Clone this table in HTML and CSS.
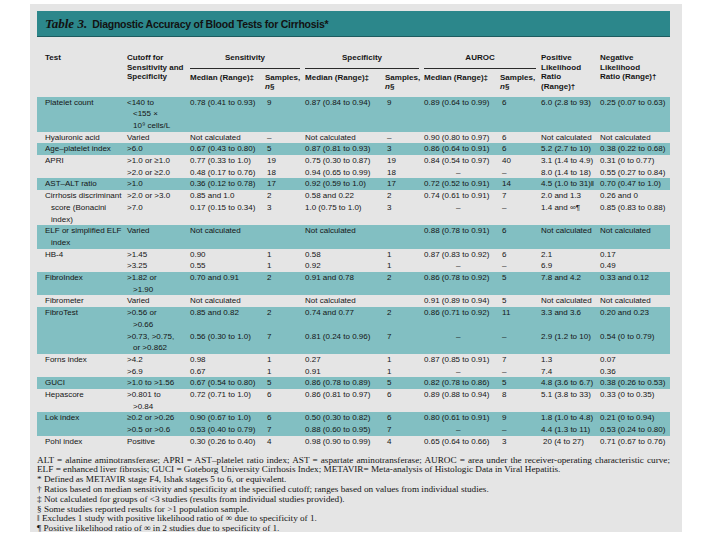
FILE: index.html
```html
<!DOCTYPE html>
<html>
<head>
<meta charset="utf-8">
<link rel="stylesheet" href="styles.css">
</head>
<body>
<div class="panel">
  <div class="titlebar"><span class="tnum">Table 3.</span><span class="ttext">Diagnostic Accuracy of Blood Tests for Cirrhosis*</span></div>
  <table class="tbl">
    <colgroup>
      <col class="w-test"><col class="w-cut"><col class="w-med1"><col class="w-s1"><col class="w-med2"><col class="w-s2"><col class="w-med3"><col class="w-s3"><col class="w-plr"><col class="w-nlr">
    </colgroup>
    <thead>
      <tr class="r1">
        <th rowspan="2" class="h-test">Test</th>
        <th rowspan="2">Cutoff for<br>Sensitivity and<br>Specificity</th>
        <th colspan="2" class="grp"><span class="grp-line">Sensitivity</span></th>
        <th colspan="2" class="grp"><span class="grp-line">Specificity</span></th>
        <th colspan="2" class="grp"><span class="grp-line">AUROC</span></th>
        <th rowspan="2">Positive<br>Likelihood<br>Ratio<br>(Range)†</th>
        <th rowspan="2">Negative<br>Likelihood<br>Ratio (Range)†</th>
      </tr>
      <tr class="r2">
        <th>Median (Range)‡</th><th>Samples,<br><i>n</i>§</th>
        <th>Median (Range)‡</th><th>Samples,<br><i>n</i>§</th>
        <th>Median (Range)‡</th><th>Samples,<br><i>n</i>§</th>
      </tr>
    </thead>
    <tbody>
      <tr class="t"><td class="c1">Platelet count</td><td class="c2">&lt;140 to<br>&lt;155 ×<br>10⁹ cells/L</td><td>0.78 (0.41 to 0.93)</td><td class="n">9</td><td>0.87 (0.84 to 0.94)</td><td class="n">9</td><td>0.89 (0.64 to 0.99)</td><td class="n">6</td><td>6.0 (2.8 to 93)</td><td>0.25 (0.07 to 0.63)</td></tr>
      <tr><td class="c1">Hyaluronic acid</td><td class="c2">Varied</td><td>Not calculated</td><td class="n">–</td><td>Not calculated</td><td class="n">–</td><td>0.90 (0.80 to 0.97)</td><td class="n">6</td><td>Not calculated</td><td>Not calculated</td></tr>
      <tr class="t"><td class="c1">Age–platelet index</td><td class="c2">&gt;6.0</td><td>0.67 (0.43 to 0.80)</td><td class="n">5</td><td>0.87 (0.81 to 0.93)</td><td class="n">3</td><td>0.86 (0.64 to 0.91)</td><td class="n">6</td><td>5.2 (2.7 to 10)</td><td>0.38 (0.22 to 0.68)</td></tr>
      <tr><td class="c1">APRI</td><td class="c2">&gt;1.0 or ≥1.0</td><td>0.77 (0.33 to 1.0)</td><td class="n">19</td><td>0.75 (0.30 to 0.87)</td><td class="n">19</td><td>0.84 (0.54 to 0.97)</td><td class="n">40</td><td>3.1 (1.4 to 4.9)</td><td>0.31 (0 to 0.77)</td></tr>
      <tr><td class="c1"></td><td class="c2">&gt;2.0 or ≥2.0</td><td>0.48 (0.17 to 0.76)</td><td class="n">18</td><td>0.94 (0.65 to 0.99)</td><td class="n">18</td><td class="d">–</td><td class="n">–</td><td>8.0 (1.4 to 18)</td><td>0.55 (0.27 to 0.84)</td></tr>
      <tr class="t"><td class="c1">AST–ALT ratio</td><td class="c2">&gt;1.0</td><td>0.36 (0.12 to 0.78)</td><td class="n">17</td><td>0.92 (0.59 to 1.0)</td><td class="n">17</td><td>0.72 (0.52 to 0.91)</td><td class="n">14</td><td>4.5 (1.0 to 31)‖</td><td>0.70 (0.47 to 1.0)</td></tr>
      <tr><td class="c1">Cirrhosis discriminant</td><td class="c2">&gt;2.0 or &gt;3.0</td><td>0.85 and 1.0</td><td class="n">2</td><td>0.58 and 0.22</td><td class="n">2</td><td>0.74 (0.61 to 0.91)</td><td class="n">7</td><td>2.0 and 1.3</td><td>0.26 and 0</td></tr>
      <tr><td class="c1 cont">score (Bonacini<br>index)</td><td class="c2">&gt;7.0</td><td>0.17 (0.15 to 0.34)</td><td class="n">3</td><td>1.0 (0.75 to 1.0)</td><td class="n">3</td><td class="d">–</td><td class="n">–</td><td>1.4 and ∞¶</td><td>0.85 (0.83 to 0.88)</td></tr>
      <tr class="t"><td class="c1">ELF or simplified ELF<br>index</td><td class="c2">Varied</td><td>Not calculated</td><td class="n"></td><td>Not calculated</td><td class="n"></td><td>0.88 (0.78 to 0.91)</td><td class="n">6</td><td>Not calculated</td><td>Not calculated</td></tr>
      <tr><td class="c1">HB-4</td><td class="c2">&gt;1.45</td><td>0.90</td><td class="n">1</td><td>0.58</td><td class="n">1</td><td>0.87 (0.83 to 0.92)</td><td class="n">6</td><td>2.1</td><td>0.17</td></tr>
      <tr><td class="c1"></td><td class="c2">&gt;3.25</td><td>0.55</td><td class="n">1</td><td>0.92</td><td class="n">1</td><td class="d">–</td><td class="n">–</td><td>6.9</td><td>0.49</td></tr>
      <tr class="t"><td class="c1">FibroIndex</td><td class="c2">&gt;1.82 or<br>&gt;1.90</td><td>0.70 and 0.91</td><td class="n">2</td><td>0.91 and 0.78</td><td class="n">2</td><td>0.86 (0.78 to 0.92)</td><td class="n">5</td><td>7.8 and 4.2</td><td>0.33 and 0.12</td></tr>
      <tr><td class="c1">Fibrometer</td><td class="c2">Varied</td><td>Not calculated</td><td class="n"></td><td>Not calculated</td><td class="n"></td><td>0.91 (0.89 to 0.94)</td><td class="n">5</td><td>Not calculated</td><td>Not calculated</td></tr>
      <tr class="t"><td class="c1">FibroTest</td><td class="c2">&gt;0.56 or<br>&gt;0.66</td><td>0.85 and 0.82</td><td class="n">2</td><td>0.74 and 0.77</td><td class="n">2</td><td>0.86 (0.71 to 0.92)</td><td class="n">11</td><td>3.3 and 3.6</td><td>0.20 and 0.23</td></tr>
      <tr class="t"><td class="c1"></td><td class="c2">&gt;0.73, &gt;0.75,<br>or &gt;0.862</td><td>0.56 (0.30 to 1.0)</td><td class="n">7</td><td>0.81 (0.24 to 0.96)</td><td class="n">7</td><td class="d">–</td><td class="n">–</td><td>2.9 (1.2 to 10)</td><td>0.54 (0 to 0.79)</td></tr>
      <tr><td class="c1">Forns index</td><td class="c2">&gt;4.2</td><td>0.98</td><td class="n">1</td><td>0.27</td><td class="n">1</td><td>0.87 (0.85 to 0.91)</td><td class="n">7</td><td>1.3</td><td>0.07</td></tr>
      <tr><td class="c1"></td><td class="c2">&gt;6.9</td><td>0.67</td><td class="n">1</td><td>0.91</td><td class="n">1</td><td class="d">–</td><td class="n">–</td><td>7.4</td><td>0.36</td></tr>
      <tr class="t"><td class="c1">GUCI</td><td class="c2">&gt;1.0 to &gt;1.56</td><td>0.67 (0.54 to 0.80)</td><td class="n">5</td><td>0.86 (0.78 to 0.89)</td><td class="n">5</td><td>0.82 (0.78 to 0.86)</td><td class="n">5</td><td>4.8 (3.6 to 6.7)</td><td>0.38 (0.26 to 0.53)</td></tr>
      <tr><td class="c1">Hepascore</td><td class="c2">&gt;0.801 to<br>&gt;0.84</td><td>0.72 (0.71 to 1.0)</td><td class="n">6</td><td>0.86 (0.81 to 0.97)</td><td class="n">6</td><td>0.89 (0.88 to 0.94)</td><td class="n">8</td><td>5.1 (3.8 to 33)</td><td>0.33 (0 to 0.35)</td></tr>
      <tr class="t"><td class="c1">Lok index</td><td class="c2">≥0.2 or &gt;0.26</td><td>0.90 (0.67 to 1.0)</td><td class="n">6</td><td>0.50 (0.30 to 0.82)</td><td class="n">6</td><td>0.80 (0.61 to 0.91)</td><td class="n">9</td><td>1.8 (1.0 to 4.8)</td><td>0.21 (0 to 0.94)</td></tr>
      <tr class="t"><td class="c1"></td><td class="c2">&gt;0.5 or &gt;0.6</td><td>0.53 (0.40 to 0.79)</td><td class="n">7</td><td>0.88 (0.60 to 0.95)</td><td class="n">7</td><td class="d">–</td><td class="n">–</td><td>4.4 (1.3 to 11)</td><td>0.53 (0.24 to 0.80)</td></tr>
      <tr><td class="c1">Pohl index</td><td class="c2">Positive</td><td>0.30 (0.26 to 0.40)</td><td class="n">4</td><td>0.98 (0.90 to 0.99)</td><td class="n">4</td><td>0.65 (0.64 to 0.66)</td><td class="n">3</td><td class="ind">20 (4 to 27)</td><td>0.71 (0.67 to 0.76)</td></tr>
    </tbody>
  </table>
  <div class="notes">
    <p class="just">ALT = alanine aminotransferase; APRI = AST–platelet ratio index; AST = aspartate aminotransferase; AUROC = area under the receiver-operating characteristic curve;</p>
    <p>ELF = enhanced liver fibrosis; GUCI = Goteborg University Cirrhosis Index; METAVIR= Meta-analysis of Histologic Data in Viral Hepatitis.</p>
    <p>* Defined as METAVIR stage F4, Ishak stages 5 to 6, or equivalent.</p>
    <p>† Ratios based on median sensitivity and specificity at the specified cutoff; ranges based on values from individual studies.</p>
    <p>‡ Not calculated for groups of &lt;3 studies (results from individual studies provided).</p>
    <p>§ Some studies reported results for &gt;1 population sample.</p>
    <p>‖ Excludes 1 study with positive likelihood ratio of ∞ due to specificity of 1.</p>
    <p>¶ Positive likelihood ratio of ∞ in 2 studies due to specificity of 1.</p>
  </div>
</div>
</body>
</html>
```

FILE: styles.css
```css
html, body {
  margin: 0;
  padding: 0;
  background: #ffffff;
}

.panel {
  margin: 4px 0 0 30px;
  width: 652px;
  height: 528px;
  box-sizing: border-box;
  padding: 7px 12px 0 7px;
  background: #e5e5e5;
  color: #151515;
}

.titlebar {
  height: 25px;
  border-bottom: 1px solid #1d5c60;
  background: #2c878b;
  display: flex;
  align-items: center;
  padding-left: 8px;
  gap: 5px;
  color: #121212;
}

.tnum {
  font-family: "Liberation Serif", serif;
  font-style: italic;
  font-weight: bold;
  font-size: 13px;
}

.ttext {
  font-family: "Liberation Sans", sans-serif;
  font-weight: bold;
  font-size: 10.5px;
  letter-spacing: -0.25px;
}

.tbl {
  width: 633px;
  table-layout: fixed;
  border-collapse: collapse;
  font-family: "Liberation Sans", sans-serif;
  font-size: 8px;
  color: #151515;
}

.w-test { width: 88px; }
.w-cut { width: 63px; }
.w-med1 { width: 75px; }
.w-s1 { width: 40px; }
.w-med2 { width: 80px; }
.w-s2 { width: 39px; }
.w-med3 { width: 76px; }
.w-s3 { width: 41px; }
.w-plr { width: 59px; }
.w-nlr { width: 72px; }

.tbl th {
  font-weight: bold;
  text-align: left;
  vertical-align: top;
  line-height: 9.5px;
  padding: 16px 2px 0 2px;
  white-space: nowrap;
}

.tbl th.h-test {
  padding-left: 8px;
}

.tbl th.grp {
  text-align: center;
  padding: 16px 0 0 0;
}

.grp-line {
  display: block;
  margin: 0 3px 0 2px;
  padding-bottom: 5px;
  border-bottom: 1px solid #2a2a2a;
}

.tbl tr.r2 th {
  padding: 4px 2px 5px 2px;
}

.tbl td {
  line-height: 11.7px;
  padding: 0 2px;
  vertical-align: top;
  white-space: nowrap;
}

.tbl tr.t td {
  background: #82bfc2;
}

.tbl td.c1 {
  padding-left: 14px;
  text-indent: -6px;
}

.tbl td.c1.cont {
  text-indent: 0;
}

.tbl td.c2 {
  padding-left: 8px;
  text-indent: -6px;
}

.tbl td.n {
  padding-left: 4px;
}

.tbl td.d {
  padding-left: 34px;
}

.tbl td.ind {
  padding-left: 4px;
}

.notes {
  margin-top: 8px;
  font-family: "Liberation Serif", serif;
  font-size: 9.2px;
  line-height: 9.8px;
  color: #141414;
}

.notes p {
  margin: 0;
  white-space: nowrap;
}

.notes p.just {
  white-space: normal;
  text-align: justify;
  text-align-last: justify;
}
```
